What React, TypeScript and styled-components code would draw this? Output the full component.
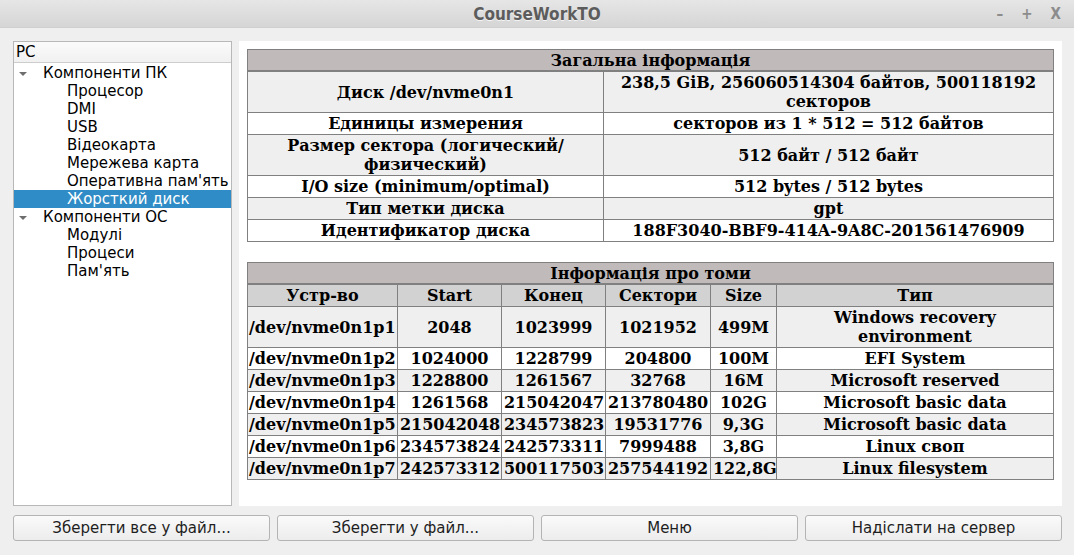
import React from "react";
import styled, { createGlobalStyle } from "styled-components";

const GlobalStyle = createGlobalStyle`
  html, body {
    margin: 0;
    padding: 0;
    background: #efefef;
  }
`;

const Window = styled.div`
  width: 1074px;
  height: 555px;
  display: flex;
  flex-direction: column;
  background: #efefef;
  font-family: "DejaVu Sans", "Liberation Sans", sans-serif;
  overflow: hidden;
`;

const TitleBar = styled.div`
  height: 28px;
  display: grid;
  grid-template-columns: 1fr auto 1fr;
  align-items: center;
  background: linear-gradient(#e6e6e6, #d5d5d5);
  border-bottom: 1px solid #cfcfcf;
  box-sizing: border-box;
`;

const Title = styled.div`
  grid-column: 2;
  font-family: "DejaVu Sans Condensed", "DejaVu Sans", sans-serif;
  font-stretch: condensed;
  font-weight: bold;
  font-size: 17px;
  color: #5c5c5c;
  text-shadow: 0 1px 0 #f4f4f4;
`;

const Controls = styled.div`
  grid-column: 3;
  justify-self: end;
  display: flex;
  gap: 18px;
  padding-right: 13px;
  font-family: "DejaVu Sans Condensed", "DejaVu Sans", sans-serif;
  font-weight: bold;
  font-size: 15px;
  color: #8c8c8c;
`;

const Body = styled.div`
  flex: 1;
  display: flex;
  flex-direction: column;
  padding: 13px 12px 14px 13px;
  gap: 9px;
`;

const Content = styled.div`
  flex: 1;
  display: flex;
  gap: 7px;
  min-height: 0;
`;

const Tree = styled.div`
  width: 220px;
  box-sizing: border-box;
  border: 1px solid #b8b8b8;
  background: #fff;
  display: flex;
  flex-direction: column;
  font-size: 15px;
  color: #000;
`;

const TreeHeader = styled.div`
  height: 21px;
  box-sizing: border-box;
  padding-left: 2px;
  line-height: 20px;
  background: linear-gradient(#fbfbfb, #f1f1f1);
  border-bottom: 1px solid #cdcdcd;
  margin-bottom: 1px;
`;

const TreeItem = styled.div<{ $level: number; $selected?: boolean }>`
  height: 18px;
  line-height: 18px;
  display: flex;
  align-items: center;
  padding-left: ${(p) => (p.$level === 0 ? 5 : 53)}px;
  white-space: nowrap;
  background: ${(p) => (p.$selected ? "#308cc6" : "transparent")};
  color: ${(p) => (p.$selected ? "#fff" : "#000")};
`;

const Arrow = styled.span`
  width: 0;
  height: 0;
  border-left: 4px solid transparent;
  border-right: 4px solid transparent;
  border-top: 4px solid #6e6e6e;
  margin-right: 16px;
  margin-top: 1px;
`;

const Report = styled.div`
  flex: 1;
  background: #fff;
  padding: 8px;
  display: flex;
  flex-direction: column;
  gap: 20px;
`;

const Table = styled.table`
  width: 806px;
  border-collapse: collapse;
  table-layout: fixed;
  font-family: "DejaVu Serif", "Liberation Serif", serif;
  font-weight: bold;
  font-size: 16px;
  line-height: 19px;
  color: #000;
`;

const Caption = styled.td`
  background: #c0bbba;
  border: 1px solid #808080;
  border-bottom: 2px solid #808080;
  text-align: center;
  padding: 1px 2px 0;
`;

const HeadCell = styled.td`
  background: #d2d2d2;
  border: 1px solid #808080;
  text-align: center;
  padding: 1px 2px;
`;

const Row = styled.tr<{ $odd: boolean }>`
  background: ${(p) => (p.$odd ? "#efefef" : "#fff")};
`;

const Cell = styled.td<{ $left?: boolean }>`
  border: 1px solid #808080;
  text-align: ${(p) => (p.$left ? "left" : "center")};
  vertical-align: middle;
  padding: 1px ${(p) => (p.$left ? 0 : 2)}px 1px ${(p) => (p.$left ? 1 : 2)}px;
  white-space: ${(p) => (p.$left ? "nowrap" : "normal")};
  overflow: hidden;
`;

const Buttons = styled.div`
  display: grid;
  grid-template-columns: repeat(4, 1fr);
  gap: 7px;
`;

const Button = styled.button`
  height: 26px;
  border: 1px solid #b4b4b4;
  border-radius: 3px;
  background: linear-gradient(#fafafa, #ececec);
  font-family: "DejaVu Sans", "Liberation Sans", sans-serif;
  font-size: 15px;
  color: #1e1e1e;
  padding: 0;
`;

const tree = [
  { label: "Компоненти ПК", level: 0 },
  { label: "Процесор", level: 1 },
  { label: "DMI", level: 1 },
  { label: "USB", level: 1 },
  { label: "Відеокарта", level: 1 },
  { label: "Мережева карта", level: 1 },
  { label: "Оперативна пам'ять", level: 1 },
  { label: "Жорсткий диск", level: 1, selected: true },
  { label: "Компоненти ОС", level: 0 },
  { label: "Модулі", level: 1 },
  { label: "Процеси", level: 1 },
  { label: "Пам'ять", level: 1 },
];

const general = [
  ["Диск /dev/nvme0n1", "238,5 GiB, 256060514304 байтов, 500118192 секторов"],
  ["Единицы измерения", "секторов из 1 * 512 = 512 байтов"],
  ["Размер сектора (логический/ физический)", "512 байт / 512 байт"],
  ["I/O size (minimum/optimal)", "512 bytes / 512 bytes"],
  ["Тип метки диска", "gpt"],
  ["Идентификатор диска", "188F3040-BBF9-414A-9A8C-201561476909"],
];

const volumeCols = [
  { title: "Устр-во", width: 150 },
  { title: "Start", width: 104 },
  { title: "Конец", width: 104 },
  { title: "Сектори", width: 105 },
  { title: "Size", width: 66 },
  { title: "Тип", width: 277 },
];

const volumes = [
  ["/dev/nvme0n1p1", "2048", "1023999", "1021952", "499M", "Windows recovery environment"],
  ["/dev/nvme0n1p2", "1024000", "1228799", "204800", "100M", "EFI System"],
  ["/dev/nvme0n1p3", "1228800", "1261567", "32768", "16M", "Microsoft reserved"],
  ["/dev/nvme0n1p4", "1261568", "215042047", "213780480", "102G", "Microsoft basic data"],
  ["/dev/nvme0n1p5", "215042048", "234573823", "19531776", "9,3G", "Microsoft basic data"],
  ["/dev/nvme0n1p6", "234573824", "242573311", "7999488", "3,8G", "Linux своп"],
  ["/dev/nvme0n1p7", "242573312", "500117503", "257544192", "122,8G", "Linux filesystem"],
];

export default function App() {
  return (
    <>
      <GlobalStyle />
      <Window>
        <TitleBar>
          <Title>CourseWorkTO</Title>
          <Controls>
            <span>–</span>
            <span>+</span>
            <span>X</span>
          </Controls>
        </TitleBar>
        <Body>
          <Content>
            <Tree>
              <TreeHeader>PC</TreeHeader>
              {tree.map((item) => (
                <TreeItem key={item.label} $level={item.level} $selected={item.selected}>
                  {item.level === 0 && <Arrow />}
                  {item.label}
                </TreeItem>
              ))}
            </Tree>
            <Report>
              <Table>
                <colgroup>
                  <col style={{ width: 356 }} />
                  <col style={{ width: 450 }} />
                </colgroup>
                <tbody>
                  <tr>
                    <Caption colSpan={2}>Загальна інформація</Caption>
                  </tr>
                  {general.map(([name, value], i) => (
                    <Row key={name} $odd={i % 2 === 0}>
                      <Cell>{name}</Cell>
                      <Cell>{value}</Cell>
                    </Row>
                  ))}
                </tbody>
              </Table>
              <Table>
                <colgroup>
                  {volumeCols.map((c) => (
                    <col key={c.title} style={{ width: c.width }} />
                  ))}
                </colgroup>
                <tbody>
                  <tr>
                    <Caption colSpan={6}>Інформація про томи</Caption>
                  </tr>
                  <tr>
                    {volumeCols.map((c) => (
                      <HeadCell key={c.title}>{c.title}</HeadCell>
                    ))}
                  </tr>
                  {volumes.map((v, i) => (
                    <Row key={v[0]} $odd={i % 2 === 0}>
                      {v.map((text, j) => (
                        <Cell key={j} $left={j === 0}>
                          {text}
                        </Cell>
                      ))}
                    </Row>
                  ))}
                </tbody>
              </Table>
            </Report>
          </Content>
          <Buttons>
            <Button>Зберегти все у файл...</Button>
            <Button>Зберегти у файл...</Button>
            <Button>Меню</Button>
            <Button>Надіслати на сервер</Button>
          </Buttons>
        </Body>
      </Window>
    </>
  );
}
